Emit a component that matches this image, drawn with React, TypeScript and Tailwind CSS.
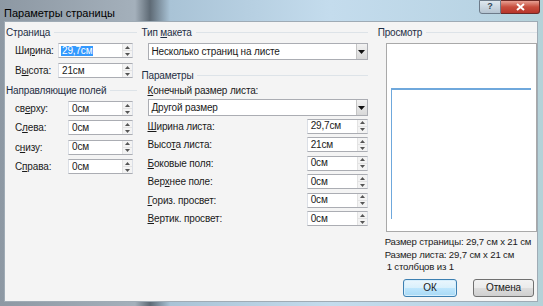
import React from 'react';

const Spin = () => (
  <div className="flex flex-col w-[10px] h-full border-l border-[#e3e3e3] bg-[#f3f3f3]">
    <div className="flex-1 flex items-center justify-center border-b border-[#e3e3e3]">
      <svg width="5" height="3" viewBox="0 0 5 3"><path d="M0 3L2.5 0L5 3Z" fill="#555" /></svg>
    </div>
    <div className="flex-1 flex items-center justify-center">
      <svg width="5" height="3" viewBox="0 0 5 3"><path d="M0 0L5 0L2.5 3Z" fill="#555" /></svg>
    </div>
  </div>
);

const Field = ({ value, selected = false, w }: { value: string; selected?: boolean; w: string }) => (
  <div className={`flex h-[15px] border border-[#abadb3] border-l-[#dbdfe6] border-r-[#dbdfe6] bg-white ${w}`}>
    <div className="flex-1 flex items-center pl-[2px] leading-none">
      <span className={selected ? 'bg-[#3399ff] text-white px-[1px]' : 'px-[1px]'}>{value}</span>
    </div>
    <Spin />
  </div>
);

const Select = ({ value }: { value: string }) => (
  <div className="flex h-[17px] w-[220px] border border-[#abadb3] bg-white">
    <div className="flex-1 flex items-center pl-[3px]">{value}</div>
    <div className="w-[11px] flex items-center justify-center bg-[linear-gradient(#f2f2f2,#d8d8d8)] border-l border-[#c5c5c5]">
      <svg width="7" height="4" viewBox="0 0 7 4"><path d="M0 0L7 0L3.5 4Z" fill="#111" /></svg>
    </div>
  </div>
);

const Heading = ({ children }: { children: React.ReactNode }) => (
  <div className="flex items-center gap-[4px] h-[13px]">
    <span className="text-[#1e2f45]">{children}</span>
    <div className="flex-1 h-px bg-[#dde3e8]" />
  </div>
);

const LeftRow = ({ label, value }: { label: React.ReactNode; value: string }) => (
  <div className="flex items-center h-[15px] pl-[9px]">
    <span className="w-[53px]">{label}</span>
    <Field value={value} w="w-[65px]" />
  </div>
);

const MidRow = ({ label, value }: { label: React.ReactNode; value: string }) => (
  <div className="flex items-center justify-between h-[15px] pl-[6px]">
    <span>{label}</span>
    <Field value={value} w="w-[61px]" />
  </div>
);

export default function App() {
  return (
    <div className="w-[543px] h-[306px] overflow-hidden flex flex-col font-['Liberation_Sans',Arial,sans-serif] text-[10px] tracking-[-0.15px] text-[#1a1a1a] bg-[linear-gradient(90deg,#8d98a3_0px,#a4b0bb_135px,#5e6a75_150px,#a9c3d6_170px,#c4dced_330px,#b9d4e4_480px,#b5d2d8_543px)]">
      {/* title bar */}
      <div className="h-[21px] flex items-start">
        <span className="mt-[5px] ml-[4px] text-[11px] text-black tracking-normal">Параметры страницы</span>
        <div className="ml-auto mr-[3px] flex">
          <div className="w-[22px] h-[14px] rounded-bl-[3px] border border-[#6d7b8a] bg-[linear-gradient(#dfe8ef,#b5c4d1)] flex items-center justify-center text-[9px] text-[#33475a] font-bold">?</div>
          <div className="w-[39px] h-[14px] rounded-br-[3px] border border-l-0 border-[#6b2a26] bg-[linear-gradient(#e8a093,#c74d3d_50%,#b7362a)] flex items-center justify-center">
            <svg width="9" height="8" viewBox="0 0 9 8"><path d="M1 1L8 7M8 1L1 7" stroke="white" strokeWidth="2" /></svg>
          </div>
        </div>
      </div>

      {/* client */}
      <div className="flex-1 ml-[4px] mr-[5px] mb-[4px] bg-[#f4f4f4] border border-[#9fabb5] flex pl-[1px] pt-[4px]">
        {/* left column */}
        <div className="w-[131px] flex flex-col">
          <Heading>Страница</Heading>
          <div className="flex flex-col gap-[5px] mt-[4px]">
            <div className="flex items-center h-[15px] pl-[9px]">
              <span className="w-[43px]">Ши<u>р</u>ина:</span>
              <Field value="29,7см" selected w="w-[75px]" />
            </div>
            <div className="flex items-center h-[15px] pl-[9px]">
              <span className="w-[43px]">В<u>ы</u>сота:</span>
              <Field value="21см" w="w-[75px]" />
            </div>
          </div>
          <div className="mt-[6px]">
            <Heading>Направляющие полей</Heading>
          </div>
          <div className="flex flex-col gap-[4.4px] mt-[4px]">
            <LeftRow label={<>св<u>е</u>рху:</>} value="0см" />
            <LeftRow label={<>С<u>л</u>ева:</>} value="0см" />
            <LeftRow label={<>с<u>н</u>изу:</>} value="0см" />
            <LeftRow label={<>С<u>п</u>рава:</>} value="0см" />
          </div>
        </div>

        {/* middle column */}
        <div className="w-[227px] ml-[5px] flex flex-col">
          <Heading>Тип <u>м</u>акета</Heading>
          <div className="mt-[4px] pl-[6px]">
            <Select value="Несколько страниц на листе" />
          </div>
          <div className="mt-[9px]">
            <Heading>Параметры</Heading>
          </div>
          <div className="pl-[6px] mt-[2px] h-[13px] flex items-center"><span><u>К</u>онечный размер листа:</span></div>
          <div className="mt-[2px] pl-[6px]">
            <Select value="Другой размер" />
          </div>
          <div className="flex flex-col gap-[3.6px] mt-[2.5px]">
            <MidRow label={<><u>Ш</u>ирина листа:</>} value="29,7см" />
            <MidRow label={<>Высо<u>т</u>а листа:</>} value="21см" />
            <MidRow label={<><u>Б</u>оковые поля:</>} value="0см" />
            <MidRow label={<>Вер<u>х</u>нее поле:</>} value="0см" />
            <MidRow label={<><u>Г</u>ориз. просвет:</>} value="0см" />
            <MidRow label={<><u>В</u>ертик. просвет:</>} value="0см" />
          </div>
        </div>

        {/* right column */}
        <div className="w-[160px] ml-[10px] flex flex-col">
          <Heading>Просмотр</Heading>
          <div className="mt-[4px] ml-[8px] w-[151px] h-[189px] border border-[#a9a9a9] bg-white pl-[4px] pt-[44px]">
            <div className="w-[140px] h-[131px] border-t-2 border-l border-[#6fa8dc]" />
          </div>
          <div className="ml-[7px] mt-[4px] leading-[12.5px] whitespace-nowrap text-[9.6px]">
            <div>Размер страницы: 29,7 см x 21 см</div>
            <div>Размер листа: 29,7 см x 21 см</div>
            <div className="pl-[2px]">1 столбцов из 1</div>
          </div>
          <div className="mt-[5px] flex justify-end gap-[16px] pr-[3px]">
            <button className="w-[54px] h-[18px] rounded-[3px] border border-[#3c7fb1] bg-[linear-gradient(#eaf6fd,#d9f0fc_50%,#bee6fd_50%,#a7d9f5)] shadow-[inset_0_0_0_1px_#d6eefc] text-[10px]">ОК</button>
            <button className="w-[61px] h-[18px] rounded-[3px] border border-[#707070] bg-[linear-gradient(#f2f2f2,#ebebeb_50%,#dddddd_50%,#cfcfcf)] text-[10px]">Отмена</button>
          </div>
        </div>
      </div>
    </div>
  );
}
